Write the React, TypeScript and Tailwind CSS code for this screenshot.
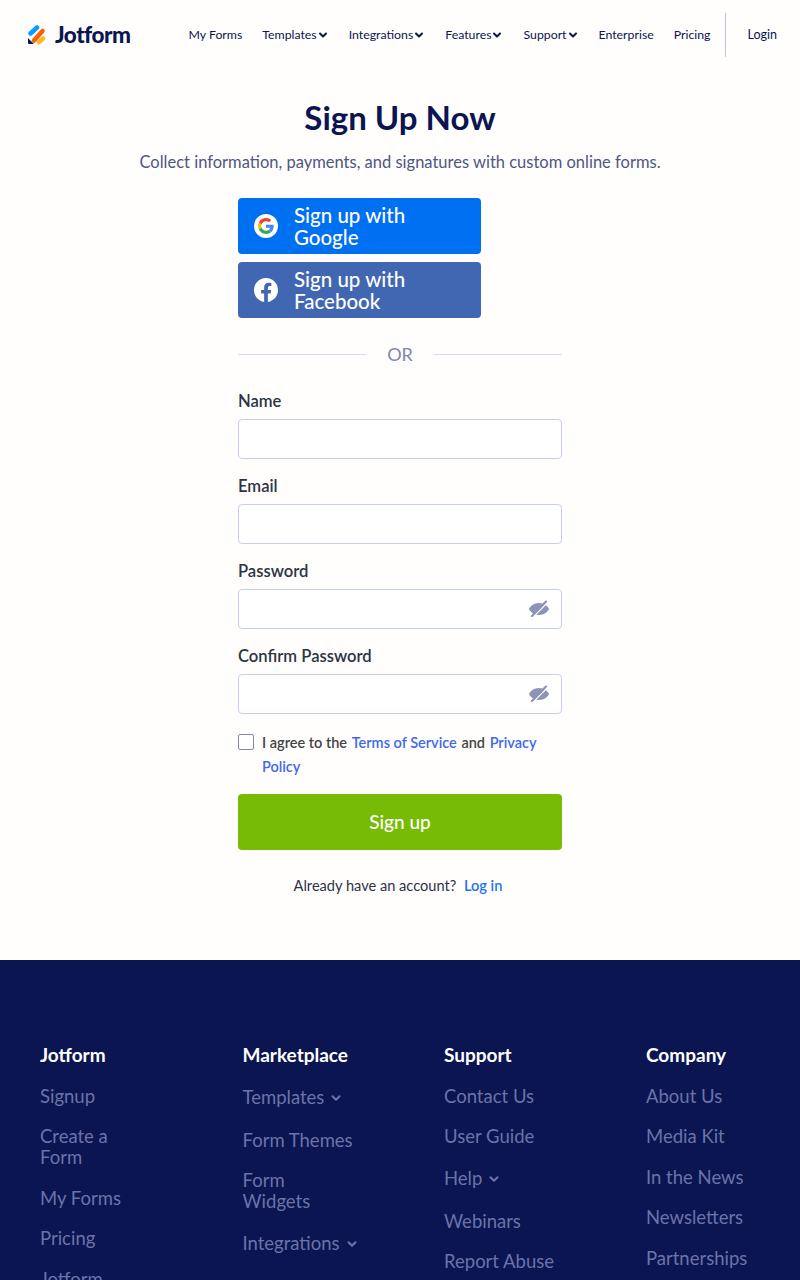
import React from 'react';
import { ChevronDown } from 'lucide-react';

const font = "font-['Lato','Liberation_Sans',sans-serif]";

const Logo = () => (
  <svg width="19" height="20" viewBox="0 0 19 20" className="shrink-0">
    <path d="M2.500 8.500 9 2.500" stroke="#0a9cff" strokeWidth="4.500" strokeLinecap="round" />
    <path d="M6 15.500 14.500 6" stroke="#ff6100" strokeWidth="4.500" strokeLinecap="round" />
    <path d="M11 17 15 13.500" stroke="#ffb629" strokeWidth="4.500" strokeLinecap="round" />
    <path d="M0 13 L5.800 19 H1.200 A1.200 1.200 0 0 1 0 17.800 Z" fill="#0a1551" />
  </svg>
);

const GoogleIcon = () => (
  <span className="w-6 h-6 rounded-full bg-white flex items-center justify-center shrink-0">
    <svg width="16" height="16" viewBox="0 0 48 48">
      <path fill="#EA4335" d="M24 9.500c3.500 0 6.600 1.200 9.100 3.600l6.800-6.800C35.800 2.500 30.300 0 24 0 14.600 0 6.500 5.400 2.600 13.200l7.900 6.200C12.400 13.700 17.700 9.500 24 9.500z" />
      <path fill="#4285F4" d="M46.900 24.500c0-1.600-.1-3.100-.4-4.500H24v9h12.900c-.6 3-2.200 5.500-4.700 7.200l7.700 6c4.500-4.200 7-10.300 7-17.700z" />
      <path fill="#FBBC05" d="M10.500 28.600c-.5-1.500-.8-3-.8-4.600s.3-3.100.8-4.600l-7.900-6.200C.9 16.500 0 20.100 0 24s.9 7.500 2.600 10.800l7.900-6.200z" />
      <path fill="#34A853" d="M24 48c6.500 0 11.900-2.100 15.900-5.800l-7.700-6c-2.100 1.400-4.900 2.300-8.200 2.300-6.300 0-11.600-4.200-13.500-9.900l-7.900 6.200C6.500 42.600 14.600 48 24 48z" />
    </svg>
  </span>
);

const FacebookIcon = () => (
  <svg width="24" height="24" viewBox="0 0 24 24" className="shrink-0">
    <path fill="#fff" d="M24 12.070C24 5.400 18.630 0 12 0S0 5.400 0 12.070c0 6.030 4.390 11.020 10.130 11.930v-8.440H7.080v-3.490h3.050V9.410c0-3.020 1.790-4.690 4.530-4.690 1.310 0 2.680.24 2.680.24v2.970h-1.510c-1.490 0-1.960.93-1.960 1.860v2.280h3.330l-.53 3.490h-2.800V24C19.610 23.090 24 18.100 24 12.070z" />
  </svg>
);

const EyeOff = () => (
  <svg width="22" height="18" viewBox="0 0 22 18" className="absolute right-[11px] top-[10px]">
    <path fill="#8d94b8" d="M11 3C6.200 3 2.400 5.900 1 9c1.400 3.100 5.200 6 10 6s8.600-2.900 10-6c-1.400-3.100-5.200-6-10-6z" />
    <path stroke="#fff" strokeWidth="1.500" d="M5 17 19 3" />
    <path stroke="#8d94b8" strokeWidth="2.200" strokeLinecap="round" d="M4 16 18 1.500" />
  </svg>
);

const Field = ({ label, secret }: { label: string; secret?: boolean }) => (
  <div className="flex flex-col gap-[8px]">
    <label className="pt-[1px] text-[16.600px] leading-[20px] font-semibold text-[#2c3345]">{label}</label>
    <div className="relative h-[40px] rounded-[4px] border border-[#c8ceed] bg-white">
      {secret && <EyeOff />}
    </div>
  </div>
);

const navItems: [string, boolean][] = [
  ['My Forms', false],
  ['Templates', true],
  ['Integrations', true],
  ['Features', true],
  ['Support', true],
  ['Enterprise', false],
  ['Pricing', false],
];

type FooterLink = { text: string; caret?: boolean };

const footerColumns: { title: string; links: FooterLink[] }[] = [
  {
    title: 'Jotform',
    links: [{ text: 'Signup' }, { text: 'Create a\nForm' }, { text: 'My Forms' }, { text: 'Pricing' }, { text: 'Jotform\nEnterprise' }],
  },
  {
    title: 'Marketplace',
    links: [{ text: 'Templates', caret: true }, { text: 'Form Themes' }, { text: 'Form\nWidgets' }, { text: 'Integrations', caret: true }],
  },
  {
    title: 'Support',
    links: [{ text: 'Contact Us' }, { text: 'User Guide' }, { text: 'Help', caret: true }, { text: 'Webinars' }, { text: 'Report Abuse' }],
  },
  {
    title: 'Company',
    links: [{ text: 'About Us' }, { text: 'Media Kit' }, { text: 'In the News' }, { text: 'Newsletters' }, { text: 'Partnerships' }],
  },
];

export default function App() {
  return (
    <div className={`${font} h-[1280px] overflow-hidden bg-[#fffefc]`}>
      {/* Header */}
      <header className="h-[70px] flex items-center pl-[28px] pr-[23px]">
        <div className="flex items-center gap-[8px]">
          <Logo />
          <span className="text-[22.500px] font-black tracking-[-0.5px] text-[#0a1551]">Jotform</span>
        </div>
        <nav className="ml-auto flex items-center gap-[20px] text-[12.300px] text-[#0a1551]">
          {navItems.map(([name, caret]) => (
            <a key={name} className="flex items-center">
              {name}
              {caret && <ChevronDown size={12} strokeWidth={4} className="text-[#0a1551]" />}
            </a>
          ))}
        </nav>
        <div className="w-px h-[44px] bg-[#bcc4de] ml-[14px] mr-[22px]" />
        <a className="text-[12.500px] text-[#0a1551]">Login</a>
      </header>

      {/* Sign up form */}
      <main className="h-[890px] flex flex-col items-center pt-[29px]">
        <h1 className="text-[33px] leading-[36px] font-bold text-[#0a1551]">Sign Up Now</h1>
        <p className="mt-[15px] text-[16.500px] leading-[24px] text-[#4e5684]">
          Collect information, payments, and signatures with custom online forms.
        </p>

        <div className="w-[324px] mt-[24px] flex flex-col">
          <a className="w-[243px] h-[56px] rounded-[4px] bg-[#0070f3] flex items-center gap-[16px] pl-[16px] text-[20.500px] leading-[22px] font-medium text-white">
            <GoogleIcon />
            <span className="w-[140px]">Sign up with Google</span>
          </a>
          <a className="w-[243px] h-[56px] mt-[8px] rounded-[4px] bg-[#4267b2] flex items-center gap-[16px] pl-[16px] text-[20.500px] leading-[22px] font-medium text-white">
            <FacebookIcon />
            <span className="w-[140px]">Sign up with Facebook</span>
          </a>

          <div className="mt-[24px] h-[24px] flex items-center gap-[21px] text-[18px] text-[#8087a8]">
            <span className="flex-1 h-px bg-[#d5d9f0]" />
            OR
            <span className="flex-1 h-px bg-[#d5d9f0]" />
          </div>

          <div className="mt-[24px] flex flex-col gap-[16px]">
            <Field label="Name" />
            <Field label="Email" />
            <Field label="Password" secret />
            <Field label="Confirm Password" secret />
          </div>

          <div className="mt-[16px] flex items-start gap-[8px]">
            <span className="w-[16px] h-[16px] mt-[4px] shrink-0 rounded-[2px] border border-[#8087a8] bg-white" />
            <p className="pt-[1px] text-[14.500px] leading-[24px] font-semibold text-[#444]">
              I agree to the <a className="text-[#3e68f0] mx-[1px]">Terms of Service</a> and <a className="text-[#3e68f0] ml-[1px]">Privacy Policy</a>
            </p>
          </div>

          <button className="mt-[15px] h-[56px] rounded-[4px] bg-[#78bb07] text-[19px] font-medium text-white">Sign up</button>

          <p className="mt-[24px] pr-[4px] text-center text-[14.600px] leading-[24px] text-[#2c3345]">
            Already have an account? <a className="ml-[4px] font-semibold text-[#2673f0]">Log in</a>
          </p>
        </div>
      </main>

      {/* Footer */}
      <footer className="h-[320px] bg-[#0a1551] pt-[84px] pl-[40px] grid grid-cols-[202.500px_201.500px_202px_1fr]">
        {footerColumns.map((col) => (
          <div key={col.title}>
            <h3 className="text-[19px] leading-[22px] font-bold text-white">{col.title}</h3>
            <ul className="mt-[19.500px] flex flex-col gap-[19.500px] text-[18.500px] leading-[21px] text-[#6c73a8] whitespace-pre-line">
              {col.links.map((link) => (
                <li key={link.text} className={link.caret ? 'flex items-center h-[24.500px] gap-[5px]' : ''}>
                  {link.text}
                  {link.caret && <ChevronDown size={14} strokeWidth={3.500} className="text-[#6c73a8]" />}
                </li>
              ))}
            </ul>
          </div>
        ))}
      </footer>
    </div>
  );
}
